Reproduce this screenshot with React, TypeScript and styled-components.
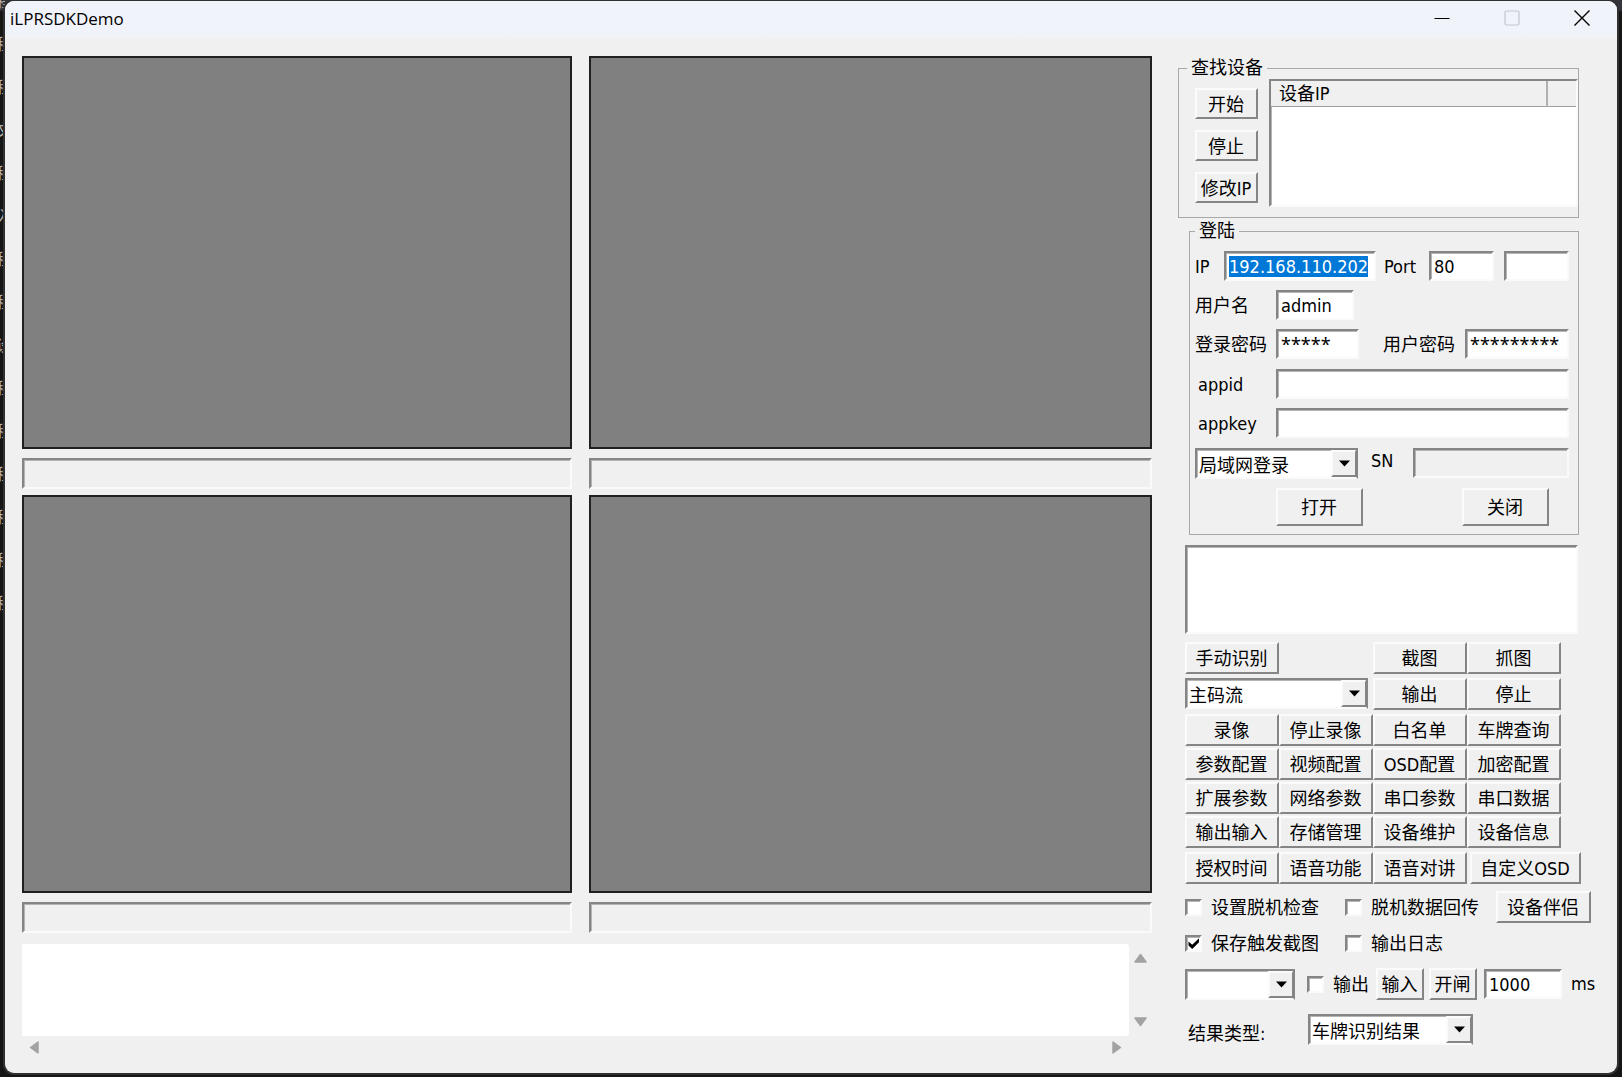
import React, { useEffect, useId, useRef } from "react";
import styled, { createGlobalStyle, css } from "styled-components";

const face = "#f0f0f0";
const shade = "#858585";
const uiFont = `"DejaVu Sans Condensed", "Noto Sans", "Noto Sans CJK SC", sans-serif`;

const GlobalStyle = createGlobalStyle`
  *, *::before, *::after { box-sizing: border-box; }
  body { margin: 0; background: #161616; color: #000; font: 18px/22px ${uiFont}; }
  button, input, select, textarea { font: inherit; color: inherit; margin: 0; border-radius: 0; }
`;

const sunken = css`
  border: 2px solid;
  border-color: ${shade} #fafafa #fafafa ${shade};
  box-shadow: inset 1px 1px 0 #b4b4b4;
`;

const raised = css`
  border: 2px solid;
  border-color: #fbfbfb ${shade} ${shade} #fbfbfb;
`;

/* ---------- window frame ---------- */

const Desktop = styled.div`
  position: relative;
  display: flex;
  min-height: 100vh;
  padding: 1px 5px 4px;
  background: linear-gradient(#34323a 0 10px, #161616 12px);
`;

const Backdrop = styled.div`
  position: absolute;
  inset: 0 auto auto 0;
  display: grid;
  grid-auto-rows: 43px;
  width: 5px;
  overflow: hidden;
  color: #b4b4ae;
  font-size: 16px;
  line-height: 4px;
  text-indent: -4px;
`;

const Window = styled.main`
  position: relative;
  flex: 1;
  min-width: 0;
  display: flex;
  flex-direction: column;
  background: ${face};
  border-radius: 9px;
  box-shadow: 0 0 0 2px #303030;
  overflow: hidden;
`;

const TitleBar = styled.header`
  display: flex;
  justify-content: space-between;
  align-items: center;
  height: 37px;
  padding-left: 5px;
  background: linear-gradient(#f0f3f9 85%, #f1f2f5);
`;

const Title = styled.h1`
  margin: 0;
  padding-bottom: 2px;
  font: 400 17px/22px "Open Sans", "Noto Sans", sans-serif;
`;

const Caption = styled.button`
  width: 70px;
  height: 36px;
  padding: 0;
  border: 0;
  background: none;
  vertical-align: top;
`;

const Content = styled.div`
  flex: 1;
  display: grid;
  grid-template-columns: minmax(0, 1fr) 415px;
  column-gap: 26px;
  padding: 18px 24px 15px 17px;
`;

/* ---------- video side ---------- */

const Videos = styled.section`
  display: flex;
  flex-direction: column;
  gap: 11px;
`;

const VideoGrid = styled.div`
  flex: 1;
  display: grid;
  grid-template-columns: 550fr 563fr;
  grid-template-rows: 433fr 438fr;
  gap: 6px 17px;
`;

const Channel = styled.div`
  display: flex;
  flex-direction: column;
  gap: 9px;
`;

const Screen = styled.div`
  flex: 1;
  background: #808080;
  border: 2px solid #202020;
`;

const StatusLine = styled.div`
  height: 31px;
  ${sunken}
`;

const LogGrid = styled.div`
  display: grid;
  grid-template-columns: minmax(0, 1fr) 23px;
  grid-template-rows: 92px 22px;
`;

const Log = styled.textarea`
  width: 100%;
  height: 100%;
  border: 0;
  border-radius: 0 3px 3px 0;
  background: #fff;
  resize: none;
  overflow: hidden;
  outline: none;
`;

const ScrollBar = styled.div<{ $vertical?: boolean }>`
  display: flex;
  flex-direction: ${(p) => (p.$vertical ? "column" : "row")};
  justify-content: space-between;
  align-items: center;
  padding: ${(p) => (p.$vertical ? "8px 0" : "0 6px")};
`;

const ScrollButton = styled.button`
  display: grid;
  padding: 0;
  border: 0;
  background: none;
`;

/* ---------- control side ---------- */

const Side = styled.aside`
  padding-top: 1px;
`;

const Group = styled.fieldset<{ $kind: "find" | "login" }>`
  min-width: 0;
  width: ${(p) => (p.$kind === "find" ? 401 : 390)}px;
  margin: ${(p) => (p.$kind === "find" ? "0 0 2px" : "0 0 10px 11px")};
  padding: ${(p) => (p.$kind === "find" ? "0 0 10px 8px" : "9px 9px 8px 5px")};
  border: 1px solid #a8a8a8;
`;

const Legend = styled.legend`
  padding: 0 4px;
`;

const FindBody = styled.div`
  display: flex;
  gap: 11px;
  padding-left: 8px;
`;

const FindButtons = styled.div`
  display: grid;
  gap: 11px;
  align-content: start;
  padding-top: 9px;
`;

const Button = styled.button<{ $w?: number; $h?: number }>`
  ${raised}
  width: ${(p) => (p.$w ? `${p.$w}px` : "100%")};
  height: ${(p) => p.$h ?? 32}px;
  padding: 2px 1px 0 0;
  background: ${face};
  white-space: nowrap;
  line-height: 22px;
`;

const DeviceList = styled.div`
  flex: 1;
  height: 128px;
  background: #fff;
  ${sunken}
`;

const DeviceTable = styled.table`
  width: 100%;
  border-collapse: collapse;
  table-layout: fixed;
`;

const HeadCell = styled.th<{ $w?: number }>`
  width: ${(p) => (p.$w ? `${p.$w}px` : "auto")};
  height: 25px;
  padding: 2px 0 0 8px;
  background: ${face};
  border-right: 2px solid #b0b0b0;
  border-bottom: 1px solid #a0a0a0;
  font-weight: 400;
  text-align: left;

  &:last-child { border-right: 0; }
`;

const Stack = styled.div<{ $gap: number }>`
  display: flex;
  flex-direction: column;
  gap: ${(p) => p.$gap}px;
`;

const Row = styled.div<{ $gap?: number; $indent?: number; $align?: string }>`
  display: flex;
  align-items: ${(p) => p.$align ?? "center"};
  gap: ${(p) => p.$gap ?? 0}px;
  padding-left: ${(p) => p.$indent ?? 0}px;
`;

const Label = styled.label<{ $w?: number; $indent?: number }>`
  flex: none;
  width: ${(p) => (p.$w ? `${p.$w}px` : "auto")};
  padding-top: 2px;
  padding-left: ${(p) => p.$indent ?? 0}px;
  white-space: nowrap;
`;

const TextBox = styled.input<{ $w?: number; $masked?: boolean }>`
  ${sunken}
  ${(p) => (p.$w ? css`flex: none; width: ${p.$w}px;` : css`flex: 1; width: 0; min-width: 0;`)}
  ${(p) => p.$masked && css`font-family: "Noto Sans", sans-serif;`}
  height: 30px;
  padding: 0 2px 0 3px;
  background: #fff;
  outline: none;

  &:disabled { background: ${face}; }
  &::selection { background: #0078d7; color: #fff; }
`;

const SelectBox = styled.div<{ $w: number }>`
  ${sunken}
  flex: none;
  display: grid;
  grid-template-columns: 1fr 25px;
  width: ${(p) => p.$w}px;
  height: 31px;
  background: #fff;
  border-right-color: ${shade};
`;

const NativeSelect = styled.select`
  grid-area: 1 / 1 / 2 / 3;
  width: 100%;
  height: 27px;
  padding: 4px 0 0 2px;
  border: 0;
  background: none;
  appearance: none;
  outline: none;
`;

const SelectArrow = styled.span`
  ${raised}
  border-right-width: 1px;
  grid-area: 1 / 2;
  display: grid;
  place-items: center;
  background: ${face};
  pointer-events: none;
`;

const Results = styled.div`
  width: 393px;
  height: 89px;
  margin-bottom: 8px;
  background: #fff;
  ${sunken}
`;

const Tools = styled.section`
  padding-left: 7px;
`;

const ToolGrid = styled.div<{ $gap: number }>`
  display: grid;
  grid-template-columns: repeat(4, 94px);
  row-gap: ${(p) => p.$gap}px;
`;

const Wide = styled.div`
  grid-column: span 2;
`;

const Options = styled.div`
  padding-top: 7px;
`;

const OptionRow = styled.div<{ $h: number; $after: number }>`
  display: flex;
  align-items: center;
  height: ${(p) => p.$h}px;
  margin-bottom: ${(p) => p.$after}px;
`;

const CheckLabel = styled.label<{ $w?: number }>`
  flex: none;
  display: flex;
  align-items: center;
  gap: 9px;
  width: ${(p) => (p.$w ? `${p.$w}px` : "auto")};
  white-space: nowrap;
`;

const CheckText = styled.span`
  padding-top: 2px;
`;

const CheckFrame = styled.span`
  display: grid;
  width: 17px;
  height: 17px;

  & > * { grid-area: 1 / 1; }
  input:not(:checked) + svg { visibility: hidden; }
`;

const CheckInput = styled.input`
  ${sunken}
  appearance: none;
  width: 17px;
  height: 17px;
  background: #fff;
`;

const Pair = styled.div`
  display: flex;
  gap: 5px;
  padding: 0 7px;
`;

const Unit = styled.span`
  padding-left: 9px;
`;

function Check({ label, width, checked }: { label: string; width?: number; checked?: boolean }) {
  return (
    <CheckLabel $w={width}>
      <CheckFrame>
        <CheckInput type="checkbox" defaultChecked={checked} />
        <svg width="17" height="17" viewBox="0 0 17 17" aria-hidden="true">
          <path d="M3.5 6.5L7.2 9.8L14 3.2V7.2L7.2 14L3.5 10.5Z" fill="#000" />
        </svg>
      </CheckFrame>
      <CheckText>{label}</CheckText>
    </CheckLabel>
  );
}

function Select({ width, options, label }: { width: number; options: string[]; label: string }) {
  return (
    <SelectBox $w={width}>
      <NativeSelect aria-label={label} defaultValue={options[0]}>
        {options.map((o) => (
          <option key={o}>{o}</option>
        ))}
      </NativeSelect>
      <SelectArrow>
        <svg width="11" height="7" viewBox="0 0 11 7" aria-hidden="true">
          <path d="M0 0.5H11L5.5 6.5Z" fill="#000" />
        </svg>
      </SelectArrow>
    </SelectBox>
  );
}

const arrowTurn = { up: 0, right: 90, down: 180, left: 270 };

function Scroll({ dir, label }: { dir: keyof typeof arrowTurn; label: string }) {
  return (
    <ScrollButton aria-label={label}>
      <svg width="13" height="13" viewBox="0 0 13 13">
        <path
          d="M6.5 2.5L12 10H1Z"
          fill="#a3a3a3"
          stroke="#a3a3a3"
          strokeWidth="1.5"
          strokeLinejoin="round"
          transform={`rotate(${arrowTurn[dir]} 6.5 6.5)`}
        />
      </svg>
    </ScrollButton>
  );
}

const backdropText = ["程", "程", "程", "文", "程", "入", "程", "程", "设", "程", "程", "程", "程", "程", "程"];

const toolRows = [
  "录像", "停止录像", "白名单", "车牌查询",
  "参数配置", "视频配置", "OSD配置", "加密配置",
  "扩展参数", "网络参数", "串口参数", "串口数据",
  "输出输入", "存储管理", "设备维护", "设备信息",
];

export default function App() {
  const ipRef = useRef<HTMLInputElement>(null);
  const id = useId();

  useEffect(() => {
    ipRef.current?.focus();
    ipRef.current?.select();
  }, []);

  return (
    <>
      <GlobalStyle />
      <Desktop>
        <Backdrop aria-hidden="true">
          {backdropText.map((t, i) => (
            <span key={i}>{t}</span>
          ))}
        </Backdrop>
        <Window>
          <TitleBar>
            <Title>iLPRSDKDemo</Title>
            <div>
              <Caption aria-label="最小化">
                <svg width="16" height="16" viewBox="0 0 16 16">
                  <path d="M0.5 8.5H15.5" stroke="#000" />
                </svg>
              </Caption>
              <Caption aria-label="最大化" disabled>
                <svg width="16" height="16" viewBox="0 0 16 16">
                  <rect x="1" y="1" width="14" height="14" rx="1.5" fill="none" stroke="#c3c4cc" strokeWidth="1.2" />
                </svg>
              </Caption>
              <Caption aria-label="关闭">
                <svg width="16" height="16" viewBox="0 0 16 16">
                  <path d="M0.5 0.5L15.5 15.5M15.5 0.5L0.5 15.5" stroke="#000" strokeWidth="1.4" />
                </svg>
              </Caption>
            </div>
          </TitleBar>

          <Content>
            <Videos>
              <VideoGrid>
                {[1, 2, 3, 4].map((n) => (
                  <Channel key={n}>
                    <Screen />
                    <StatusLine />
                  </Channel>
                ))}
              </VideoGrid>
              <LogGrid>
                <Log aria-label="日志" />
                <ScrollBar $vertical>
                  <Scroll dir="up" label="向上" />
                  <Scroll dir="down" label="向下" />
                </ScrollBar>
                <ScrollBar>
                  <Scroll dir="left" label="向左" />
                  <Scroll dir="right" label="向右" />
                </ScrollBar>
              </LogGrid>
            </Videos>

            <Side>
              <Group $kind="find">
                <Legend>查找设备</Legend>
                <FindBody>
                  <FindButtons>
                    <Button $w={63} $h={31}>开始</Button>
                    <Button $w={63} $h={31}>停止</Button>
                    <Button $w={63} $h={31}>修改IP</Button>
                  </FindButtons>
                  <DeviceList>
                    <DeviceTable>
                      <thead>
                        <tr>
                          <HeadCell>设备IP</HeadCell>
                          <HeadCell as="td" $w={29} />
                        </tr>
                      </thead>
                    </DeviceTable>
                  </DeviceList>
                </FindBody>
              </Group>

              <Group $kind="login">
                <Legend>登陆</Legend>
                <Stack $gap={10}>
                  <Stack $gap={9}>
                    <Row>
                      <Label $w={29} htmlFor={`${id}ip`}>IP</Label>
                      <TextBox ref={ipRef} id={`${id}ip`} $w={152} defaultValue="192.168.110.202" />
                      <Label $w={53} $indent={8} htmlFor={`${id}port`}>Port</Label>
                      <Row $gap={10}>
                        <TextBox id={`${id}port`} $w={65} defaultValue="80" />
                        <TextBox $w={65} aria-label="通道" />
                      </Row>
                    </Row>
                    <Row>
                      <Label $w={81} htmlFor={`${id}user`}>用户名</Label>
                      <TextBox id={`${id}user`} $w={78} defaultValue="admin" />
                    </Row>
                    <Row>
                      <Label $w={81} htmlFor={`${id}pw`}>登录密码</Label>
                      <TextBox id={`${id}pw`} $w={83} $masked defaultValue="*****" />
                      <Label $w={106} $indent={24} htmlFor={`${id}upw`}>用户密码</Label>
                      <TextBox id={`${id}upw`} $masked defaultValue="*********" />
                    </Row>
                  </Stack>
                  <Stack $gap={9}>
                    <Row>
                      <Label $w={81} $indent={3} htmlFor={`${id}appid`}>appid</Label>
                      <TextBox id={`${id}appid`} />
                    </Row>
                    <Row>
                      <Label $w={81} $indent={3} htmlFor={`${id}appkey`}>appkey</Label>
                      <TextBox id={`${id}appkey`} />
                    </Row>
                  </Stack>
                  <Stack $gap={9}>
                    <Row $align="flex-start">
                      <Select width={163} label="登录方式" options={["局域网登录"]} />
                      <Label $w={55} $indent={13} htmlFor={`${id}sn`}>SN</Label>
                      <TextBox id={`${id}sn`} disabled />
                    </Row>
                    <Row $indent={81} $gap={99}>
                      <Button $w={87} $h={38}>打开</Button>
                      <Button $w={87} $h={38}>关闭</Button>
                    </Row>
                  </Stack>
                </Stack>
              </Group>

              <Tools>
                <Results />
                <Stack $gap={4}>
                  <ToolGrid $gap={4}>
                    <Button>手动识别</Button>
                    <span />
                    <Button>截图</Button>
                    <Button>抓图</Button>
                    <Wide>
                      <Select width={183} label="码流" options={["主码流"]} />
                    </Wide>
                    <Button>输出</Button>
                    <Button>停止</Button>
                  </ToolGrid>
                  <ToolGrid $gap={2}>
                    {toolRows.map((t) => (
                      <Button key={t}>{t}</Button>
                    ))}
                  </ToolGrid>
                  <Row $gap={3}>
                    <Row>
                      <Button $w={94}>授权时间</Button>
                      <Button $w={94}>语音功能</Button>
                      <Button $w={94}>语音对讲</Button>
                    </Row>
                    <Button $w={111}>自定义OSD</Button>
                  </Row>
                </Stack>

                <Options>
                  <OptionRow $h={32} $after={9}>
                    <Check label="设置脱机检查" width={160} />
                    <Check label="脱机数据回传" width={151} />
                    <Button $w={95}>设备伴侣</Button>
                  </OptionRow>
                  <OptionRow $h={22} $after={14}>
                    <Check label="保存触发截图" width={160} checked />
                    <Check label="输出日志" />
                  </OptionRow>
                  <OptionRow $h={32} $after={14}>
                    <Row $gap={12}>
                      <Select width={110} label="输出口" options={[""]} />
                      <Check label="输出" />
                    </Row>
                    <Pair>
                      <Button $w={48}>输入</Button>
                      <Button $w={48}>开闸</Button>
                    </Pair>
                    <TextBox $w={78} defaultValue="1000" aria-label="毫秒" />
                    <Unit>ms</Unit>
                  </OptionRow>
                  <Row $align="flex-end">
                    <Label $w={123} $indent={3}>结果类型:</Label>
                    <Select width={165} label="结果类型" options={["车牌识别结果"]} />
                  </Row>
                </Options>
              </Tools>
            </Side>
          </Content>
        </Window>
      </Desktop>
    </>
  );
}
